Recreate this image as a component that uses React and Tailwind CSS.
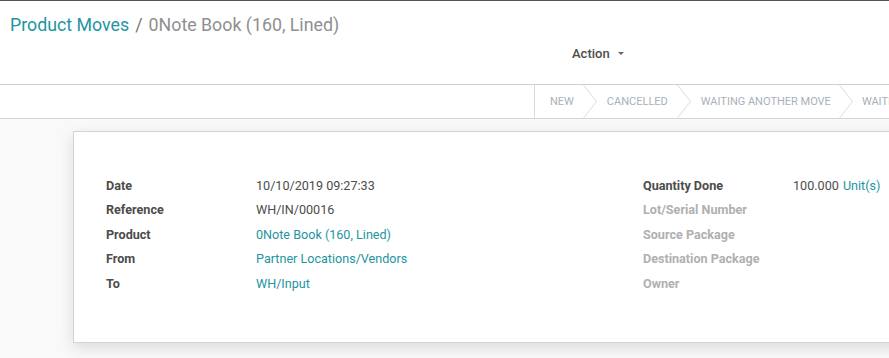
import React from "react";

const Chevron = () => (
  <svg width="15" height="33" viewBox="0 0 15 33" className="shrink-0 block">
    <path d="M0.5 0 L13.5 16.5 L0.5 33" fill="none" stroke="#dcdcdc" strokeWidth="1" />
  </svg>
);

const Row = ({ label, labelMuted, children }) => (
  <div className="flex h-[24.5px] items-center">
    <div
      className={`w-[150px] shrink-0 font-bold ${labelMuted ? "text-[#b0b0b0]" : "text-[#4c4c4c]"}`}
    >
      {label}
    </div>
    <div className="text-[#4c4c4c] whitespace-nowrap">{children}</div>
  </div>
);

export default function App() {
  return (
    <div
      className="w-[889px] h-[358px] overflow-hidden bg-[#f9f9f9] flex flex-col text-[12.6px]"
      style={{ fontFamily: "Roboto, 'Noto Sans', sans-serif" }}
    >
      {/* Control panel */}
      <div className="h-[85px] shrink-0 bg-white border-t border-[#5c4a5e] border-b border-b-[#d0d0d0] flex flex-col">
        <div className="pl-[10px] pt-[12px] text-[17.8px] leading-[24px] flex items-center whitespace-nowrap">
          <span className="text-[#1e95a0]">Product Moves</span>
          <span className="text-[#777] mx-[6px]">/</span>
          <span className="text-[#8f8f8f]">0Note Book (160, Lined)</span>
        </div>
        <div className="pl-[572px] pt-[7px] flex items-center text-[#4c4c4c] font-medium text-[13px]">
          <span>Action</span>
          <svg width="6" height="3" viewBox="0 0 6 3" className="ml-[8px]">
            <path d="M0 0 L6 0 L3 3 Z" fill="#666" />
          </svg>
        </div>
      </div>
      {/* Status bar */}
      <div className="h-[34px] shrink-0 bg-white border-b border-[#d6d6d6] flex">
        <div className="flex items-center border-l border-[#dcdcdc] pl-[15px] pt-[1px] text-[11px] text-[#a9b1b9] uppercase whitespace-nowrap ml-[534px]">
          <span>New</span>
          <span className="ml-[9px] mr-[9px] -mt-[1px]"><Chevron /></span>
          <span>Cancelled</span>
          <span className="ml-[9px] mr-[9px] -mt-[1px]"><Chevron /></span>
          <span>Waiting Another Move</span>
          <span className="ml-[8px] mr-[8px] -mt-[1px]"><Chevron /></span>
          <span>Waiting Availability</span>
        </div>
      </div>
      {/* Sheet area */}
      <div className="flex-1 pt-[12px] pl-[73px]">
        <div className="w-[1100px] h-[212px] bg-white border border-[#d3d3d8] shadow-[0_5px_14px_rgba(0,0,0,0.12)] pt-[42px] pl-[32px] flex">
          <div className="w-[537px] shrink-0">
            <Row label="Date">10/10/2019 09:27:33</Row>
            <Row label="Reference">WH/IN/00016</Row>
            <Row label="Product"><span className="text-[#1e95a0]">0Note Book (160, Lined)</span></Row>
            <Row label="From"><span className="text-[#1e95a0]">Partner Locations/Vendors</span></Row>
            <Row label="To"><span className="text-[#1e95a0]">WH/Input</span></Row>
          </div>
          <div className="w-[537px] shrink-0">
            <Row label="Quantity Done">
              100.000 <span className="text-[#1e95a0] ml-[1px]">Unit(s)</span>
            </Row>
            <Row label="Lot/Serial Number" labelMuted />
            <Row label="Source Package" labelMuted />
            <Row label="Destination Package" labelMuted />
            <Row label="Owner" labelMuted />
          </div>
        </div>
      </div>
    </div>
  );
}
